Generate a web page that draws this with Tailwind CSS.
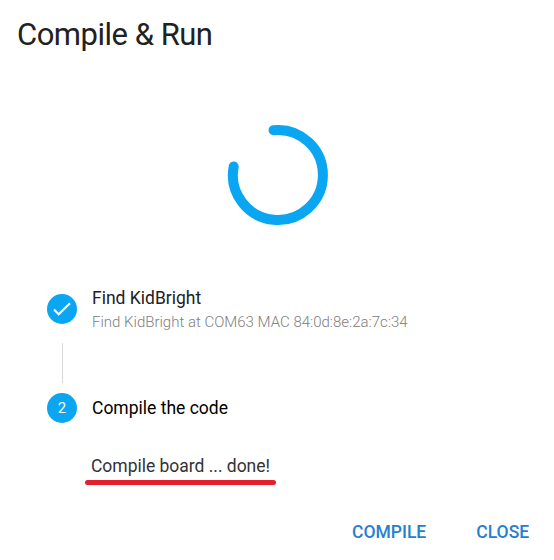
<!DOCTYPE html>
<html lang="en"><head><meta charset="utf-8"><title>Compile &amp; Run</title>
<script src="https://cdn.jsdelivr.net/npm/@tailwindcss/browser@4"></script></head>
<body class="bg-white font-['Roboto',sans-serif] text-[#212121]">
<main class="flex h-[560px] w-[554px] flex-col overflow-hidden">
<h1 class="mt-[15px] ml-[17px] h-10 text-[31px] leading-10 font-normal tracking-[-0.5px] whitespace-nowrap">Compile &amp; Run</h1>
<svg class="mt-[69px] ml-[227px] size-[102px] shrink-0" viewBox="0 0 102 102" fill="none"><path d="M46.5 6.2A45 45 0 1 1 6.7 42.5" stroke="#0aa6f1" stroke-width="10" stroke-linecap="round"/></svg>
<section class="mt-[60px] ml-[47px] flex h-[48px] items-center gap-[15px]">
<svg class="-mt-[3px] size-[30px]" viewBox="0 0 30 30"><circle cx="15" cy="15" r="15" fill="#0aa6f1"/><path d="M7 15.5l4.7 4.7L23 9.2" fill="none" stroke="white" stroke-width="2.2"/></svg>
<div><p class="text-[17.5px] leading-6">Find KidBright</p><p class="text-[15px] leading-6 font-light text-[#808080]">Find KidBright at COM63 MAC 84:0d:8e:2a:7c:34</p></div>
</section>
<div class="mt-[9px] ml-[62px] h-10 w-px shrink-0 bg-[#d8d8d8]"></div>
<section class="mt-[10px] ml-[47px] flex h-[30px] items-center gap-[15px]"><span class="flex size-[30px] items-center justify-center rounded-full bg-[#0aa6f1] text-[15px] text-white">2</span><p class="text-[17.5px] text-black">Compile the code</p></section>
<div class="mt-[31px] ml-[85px] w-[191px] text-[17.5px] leading-6 whitespace-nowrap text-[#333]"><p class="pl-[6px] tracking-[-0.02px]">Compile board ... done!</p><div class="mt-[2px] h-[5px] rounded-full bg-[#e2212c]"></div></div>
<footer class="mt-[35px] ml-[352px] flex gap-[50px] text-[17.5px] leading-6 font-medium text-[#2580d0]"><button>COMPILE</button><button>CLOSE</button></footer>
</main></body></html>
